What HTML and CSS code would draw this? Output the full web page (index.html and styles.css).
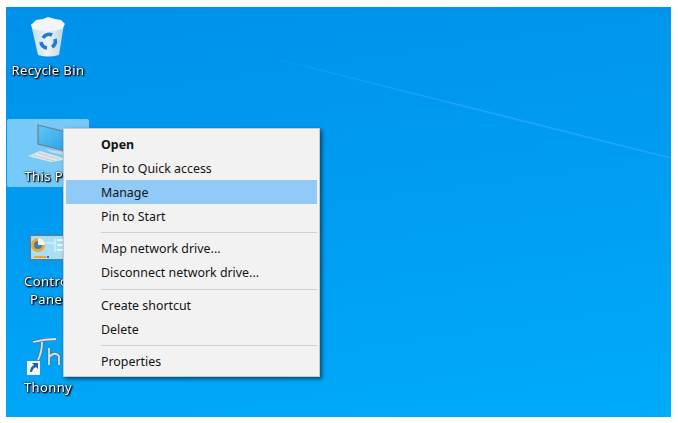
FILE: index.html
```html
<!DOCTYPE html>
<html lang="en">
<head>
    <meta charset="UTF-8">
    <meta name="viewport" content="width=device-width, initial-scale=1.0">
    <title>This PC context menu</title>
    <link rel="stylesheet" href="styles.css">
</head>
<body>
    <div class="desktop">
        <!-- Wallpaper light ray -->
        <svg class="ray" width="665" height="410" viewBox="0 0 665 410">
            <defs>
                <linearGradient id="rayFade" gradientUnits="userSpaceOnUse" x1="270" y1="52" x2="480" y2="105">
                    <stop offset="0" stop-color="#1ea6fb" stop-opacity="0.2"/>
                    <stop offset="1" stop-color="#1ea6fb" stop-opacity="1"/>
                </linearGradient>
            </defs>
            <path d="M270 52 L665 151" stroke="url(#rayFade)" stroke-width="1.6" fill="none"/>
        </svg>

        <!-- Desktop icons -->
        <div class="icon icon-bin">
            <svg width="46" height="46" viewBox="0 0 46 46">
                <defs>
                    <linearGradient id="binBody" x1="0" y1="0" x2="1" y2="0">
                        <stop offset="0" stop-color="#c4dcec"/>
                        <stop offset="0.5" stop-color="#eef2f4"/>
                        <stop offset="1" stop-color="#b9d3e4"/>
                    </linearGradient>
                </defs>
                <path d="M6 9 L39 9 L34 40 Q23 43 13 40 Z" fill="url(#binBody)"/>
                <path d="M6 10 L11 5 L18 4 L23 2 L30 4 L36 5 L40 9 L37 14 Q22 18 8 14 Z" fill="#f3f5f6"/>
                <g fill="none" stroke="#1c7ad8" stroke-width="3.6">
                    <path d="M18 23 A7 7 0 0 1 27 20"/>
                    <path d="M30 24 A7 7 0 0 1 27 32"/>
                    <path d="M22 33 A7 7 0 0 1 16 27"/>
                </g>
            </svg>
            <span class="icon-label">Recycle Bin</span>
        </div>

        <div class="icon icon-pc">
            <svg width="46" height="44" viewBox="0 0 46 44">
                <defs>
                    <linearGradient id="pcScreen" x1="0" y1="0" x2="1" y2="1">
                        <stop offset="0" stop-color="#62c6f5"/>
                        <stop offset="1" stop-color="#1f9ce8"/>
                    </linearGradient>
                </defs>
                <path d="M13 6 L50 15 L50 34 L13 25 Z" fill="url(#pcScreen)" stroke="#6f7f8c" stroke-width="1.2"/>
                <path d="M20 30 L38 33 L38 36 L25 33 Z" fill="#cfd5d9"/>
                <path d="M3 37 L15 32 L38 39 L38 41 L26 43 Z" fill="#e3e6e8"/>
                <path d="M8 36 L29 42 M13 34 L34 40" stroke="#b9c0c5" stroke-width="0.8"/>
            </svg>
            <span class="icon-label">This PC</span>
        </div>

        <div class="icon icon-panel">
            <svg width="46" height="32" viewBox="0 0 46 32">
                <rect x="5" y="3" width="44" height="25" fill="#a9def7" stroke="#3f86b0" stroke-width="2"/>
                <circle cx="13" cy="13" r="7" fill="#f0a52c"/>
                <circle cx="13" cy="13" r="4" fill="#3b7fb5"/>
                <path d="M13 13 L13 6 A7 7 0 0 1 20 13 Z" fill="#f4f4f4"/>
                <rect x="9" y="24" width="12" height="2" fill="#f0a52c"/>
                <rect x="22" y="24" width="2" height="2" fill="#2b78b8"/>
                <path d="M20 11 L30 11 M30 7 L30 20" stroke="#e8f5fb" stroke-width="1"/>
                <rect x="32" y="7" width="12" height="2" fill="#e8f5fb"/>
                <rect x="32" y="12" width="12" height="2" fill="#e8f5fb"/>
                <rect x="32" y="17" width="12" height="2" fill="#e8f5fb"/>
            </svg>
            <span class="icon-label">Control<br>Panel</span>
        </div>

        <div class="icon icon-thonny">
            <svg width="46" height="44" viewBox="0 0 46 44">
                <g fill="none" stroke="#5c7180" stroke-width="3.2">
                    <path d="M8 8 Q20 5 31 5 M17 8 Q17 18 13 26"/>
                    <path d="M24 14 L24 31 M24 23 Q30 17 34 22 L34 31"/>
                </g>
                <g fill="none" stroke="#dde2e5" stroke-width="1.8">
                    <path d="M8 8 Q20 5 31 5 M17 8 Q17 18 13 26"/>
                    <path d="M24 14 L24 31 M24 23 Q30 17 34 22 L34 31"/>
                </g>
                <rect x="2" y="27" width="13" height="14" fill="#f4f6f7"/>
                <path d="M5 38 Q5 33 9 31 L7 29 L13 29 L13 35 L11 33 Q8 34 7 38 Z" fill="#1f5fb5"/>
            </svg>
            <span class="icon-label">Thonny</span>
        </div>

        <!-- Context menu -->
        <div class="menu">
            <div class="menu-item bold">Open</div>
            <div class="menu-item">Pin to Quick access</div>
            <div class="menu-item active">Manage</div>
            <div class="menu-item">Pin to Start</div>
            <div class="menu-sep"></div>
            <div class="menu-item">Map network drive...</div>
            <div class="menu-item">Disconnect network drive...</div>
            <div class="menu-sep"></div>
            <div class="menu-item">Create shortcut</div>
            <div class="menu-item">Delete</div>
            <div class="menu-sep"></div>
            <div class="menu-item">Properties</div>
        </div>
    </div>
</body>
</html>
```

FILE: styles.css
```css
/* White frame around the screenshot */
body {
    margin: 0;
    padding: 7px 7px 6px 6px;
    background: #ffffff;
    font-family: "Noto Sans", "Open Sans", Arial, sans-serif;
}

.desktop {
    position: relative;
    width: 665px;
    height: 410px;
    overflow: hidden;
    background: linear-gradient(172deg, #0091ea 0%, #009cf2 45%, #00abfa 100%);
}

.ray {
    position: absolute;
    left: 0;
    top: 0;
    filter: blur(0.6px);
}

/* Desktop icons sit on a free canvas */
.icon {
    position: absolute;
    left: 1px;
    width: 82px;
    display: flex;
    flex-direction: column;
    align-items: center;
    text-align: center;
    filter: blur(0.35px);
}

.icon-label {
    font-size: 13px;
    line-height: 18px;
    letter-spacing: 0.4px;
    color: #ffffff;
    text-shadow: 1px 1px 2px #000000, 0 0 2px #000000, 1px 1px 1px #00213d;
}

.icon-bin {
    top: 8px;
}

.icon-bin .icon-label {
    margin-top: 0;
}

.icon-pc {
    top: 112px;
    height: 68px;
    background: rgba(190, 232, 255, 0.62);
    border-radius: 2px;
}

.icon-pc .icon-label {
    margin-top: 4px;
}

.icon-panel {
    top: 225px;
}

.icon-panel .icon-label {
    margin-top: 8px;
}

.icon-thonny {
    top: 327px;
}

/* Right click menu */
.menu {
    position: absolute;
    left: 57px;
    top: 121px;
    width: 251px;
    padding: 2.5px 2px 3px 2px;
    background: #f2f2f2;
    border: 1px solid #c8c8c8;
    box-shadow: 2px 2px 4px rgba(0, 0, 0, 0.55);
    font-size: 12.4px;
    color: #141414;
}

.menu-item {
    height: 24.2px;
    line-height: 25px;
    padding-left: 35px;
}

.menu-item.bold {
    font-weight: bold;
}

.menu-item.active {
    background: #91c9f7;
}

.menu-sep {
    height: 1px;
    margin: 4px 0 3px 35px;
    background: #d0d0d0;
}
```
